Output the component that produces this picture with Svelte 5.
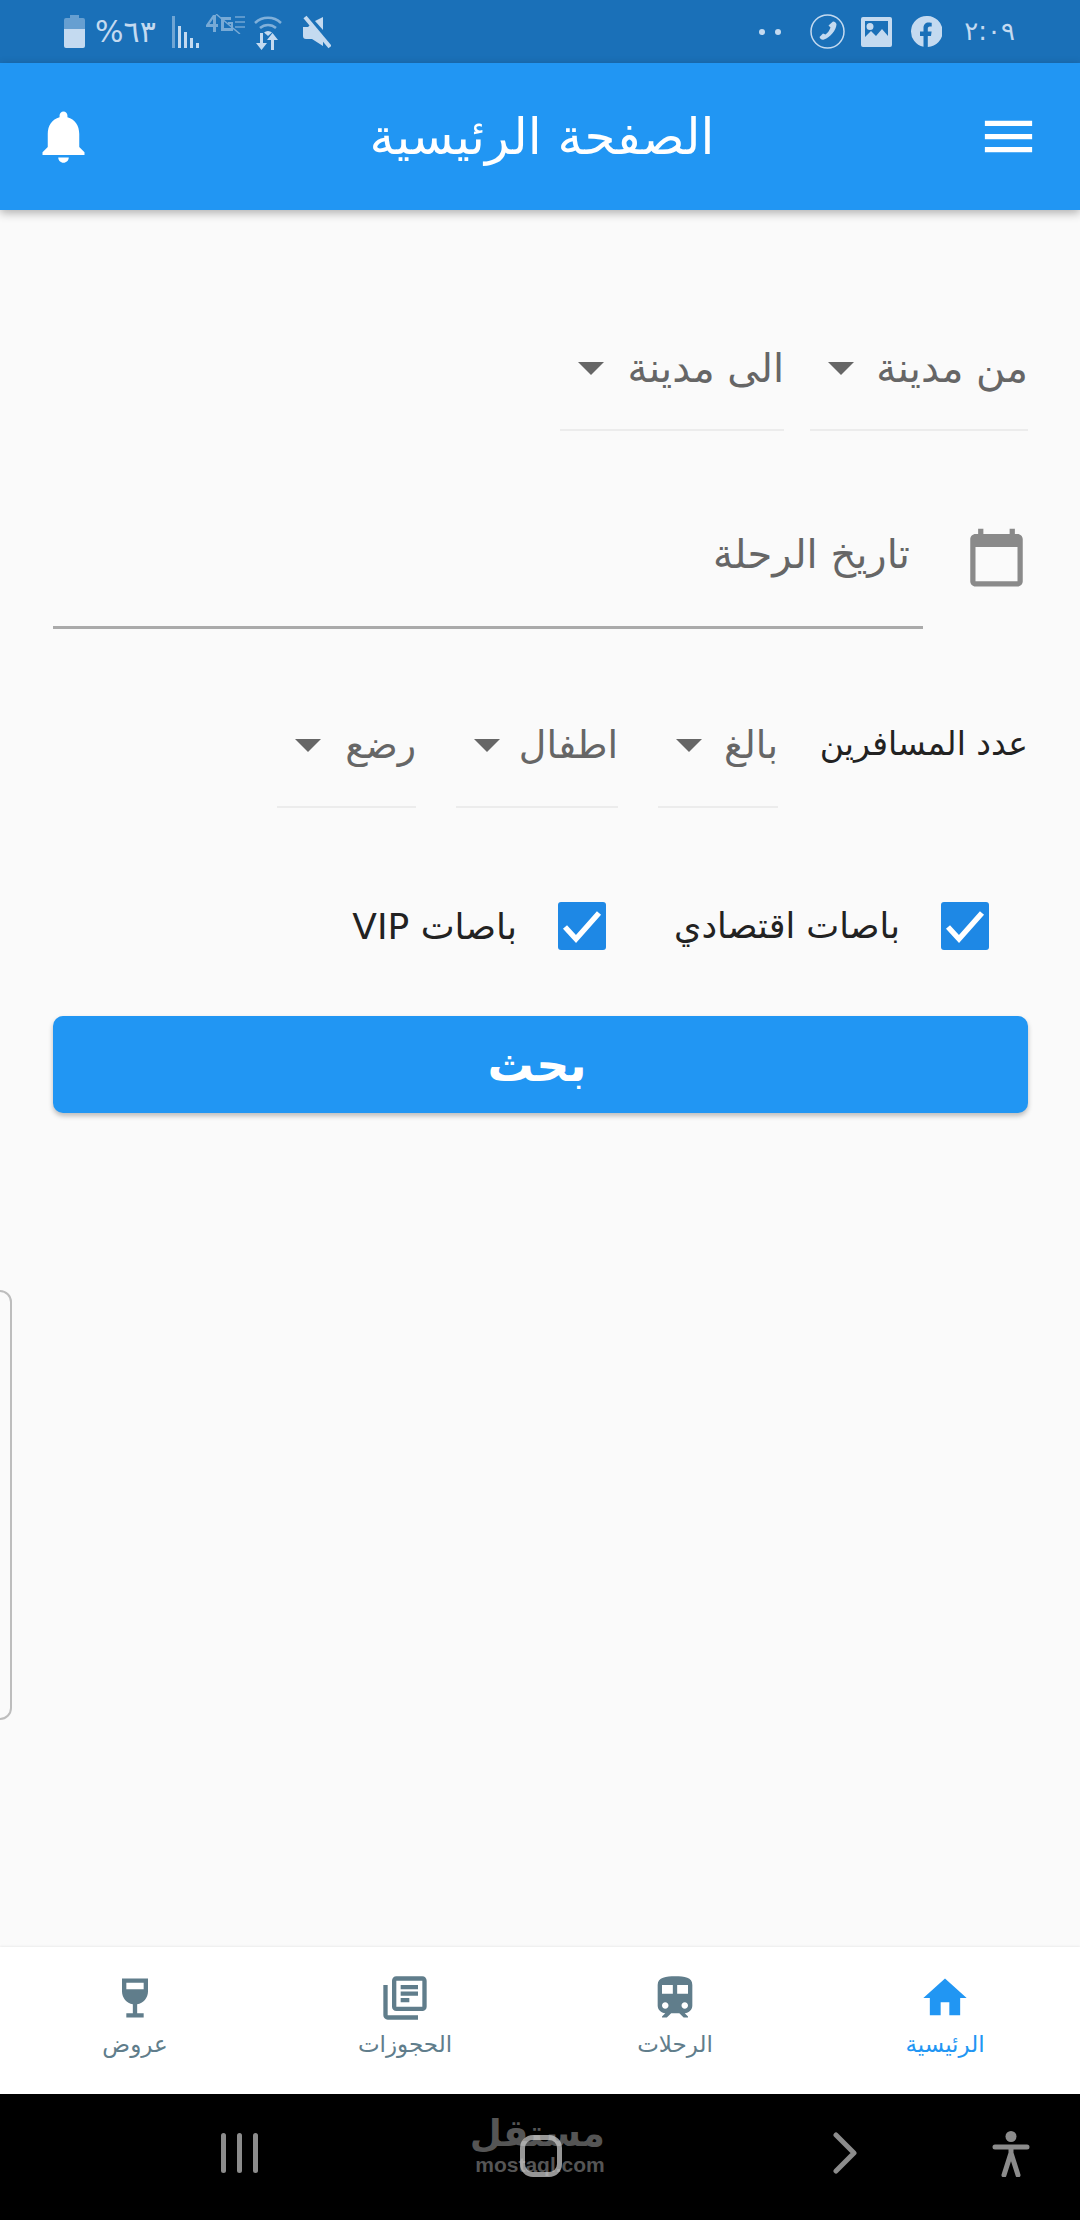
<script>
  const tabs = [
    { label: 'الرئيسية', icon: 'M10 20v-6h4v6h5v-8h3L12 3 2 12h3v8z', active: true },
    { label: 'الرحلات', icon: 'M12 2c-4 0-8 .5-8 4v9.5C4 17.43 5.57 19 7.5 19L6 20.5v.5h2.23l2-2H14l2 2h2v-.5L16.5 19c1.93 0 3.5-1.57 3.5-3.5V6c0-3.5-3.58-4-8-4zM7.5 17c-.83 0-1.5-.67-1.5-1.5S6.67 14 7.5 14s1.5.67 1.5 1.5S8.33 17 7.5 17zm3.5-7H6V6h5v4zm2 0V6h5v4h-5zm3.5 7c-.83 0-1.5-.67-1.5-1.5s.67-1.5 1.5-1.5 1.5.67 1.5 1.5-.67 1.5-1.5 1.5z' },
    { label: 'الحجوزات', icon: 'M4 6H2v14c0 1.1.9 2 2 2h14v-2H4V6zm16-4H8c-1.1 0-2 .9-2 2v12c0 1.1.9 2 2 2h12c1.1 0 2-.9 2-2V4c0-1.1-.9-2-2-2zm0 14H8V4h12v12zM10 9h8v2h-8zm0 3h4v2h-4zm0-6h8v2h-8z' },
    { label: 'عروض', icon: 'M6 3v6c0 2.97 2.16 5.43 5 5.91V19H8v2h8v-2h-3v-4.09c2.84-.48 5-2.94 5-5.91V3H6zm10 5H8V5h8v3z' }
  ];
</script>

<div class="page">
  <!-- شريط الحالة -->
  <div class="status">
    <div class="status-side">
      <svg class="battery" viewBox="0 0 21 33" width="21" height="33">
        <path d="M6 0h9v3h4a2 2 0 0 1 2 2v9H0V5a2 2 0 0 1 2-2h4z" opacity="0.45" />
        <path d="M0 14h21v17a2 2 0 0 1-2 2H2a2 2 0 0 1-2-2z" />
      </svg>
      <span class="status-text pct">%٦٣</span>
      <svg class="signal" viewBox="0 0 27 32" width="27" height="32">
        <rect x="0" y="0" width="3" height="32" opacity="0.5" />
        <rect x="6" y="10" width="3" height="22" />
        <rect x="12" y="16" width="3" height="16" />
        <rect x="18" y="22" width="3" height="10" />
        <rect x="24" y="27" width="3" height="5" />
      </svg>
      <svg class="lte" viewBox="0 0 39 20" width="39" height="20">
        <path d="M0 11 7 1h3v9h2v3h-2v5H7v-5H0zM3.500 10H7V5z" />
        <path d="M15 3h10v3h-7v8h7v-4h-3V8h5v9H15z" />
        <path d="M29 2h10v2H29zM29 7h10v2H29zM29 12h10v2H29z" opacity="0.7" />
        <path d="M10 0 L34 20" stroke="#c4daf0" stroke-width="1.500" />
      </svg>
      <svg class="wifi" viewBox="0 0 28 36" width="28" height="36">
        <path d="M1 9a19 19 0 0 1 26 0" fill="none" stroke="#c4daf0" stroke-width="2.500" opacity="0.6" />
        <path d="M6 14a12 12 0 0 1 16 0" fill="none" stroke="#c4daf0" stroke-width="2.500" opacity="0.6" />
        <path d="M10 18.500a6 6 0 0 1 8 0L14 22z" />
        <path d="M6 19h3v10h4l-5.500 7L2 29h4zM20 36h-3V26h-4l5.500-7 5.500 7h-4z" />
      </svg>
      <svg class="mute" viewBox="0 0 28 34" width="28" height="34">
        <path d="M0 12h5l3-3 12 14v8L9 24H3a3 3 0 0 1-3-3z" />
        <path d="M20 2v13L12 6z" />
        <path d="M2 2l25 30" stroke="#c4daf0" stroke-width="4" />
      </svg>
    </div>
    <div class="status-side">
      <span class="notif-dots"><i></i><i></i></span>
      <svg class="call" viewBox="0 0 35 35" width="35" height="35">
        <circle cx="17.500" cy="17.500" r="16.500" fill="none" stroke="#c4daf0" stroke-width="1.500" />
        <path d="M23 7.500c2 0 3.500 1.500 3.500 3-.5 6-6 12.500-12.500 15-2 .7-4-.5-4.500-2.500l3.500-3.500 2.500 1c2.500-2 4-4 5-7l-2-2z" />
      </svg>
      <svg class="pic" viewBox="0 0 31 30" width="31" height="30">
        <path fill-rule="evenodd" d="M2 0h27a2 2 0 0 1 2 2v26a2 2 0 0 1-2 2H2a2 2 0 0 1-2-2V2a2 2 0 0 1 2-2zM4 4v16l6-6 5 5 6-7 6 7V4zM9 6a3.500 3.500 0 1 1 0 7 3.500 3.500 0 0 1 0-7z" />
      </svg>
      <svg class="fb" viewBox="0 0 31 32" width="31" height="32">
        <path d="M15.500 0a15.500 15.500 0 0 0-3 30.700V20H9v-4.500h3.500V12c0-3.500 2-5.500 5.200-5.500 1.500 0 3 .3 3 .3V10.500h-1.700c-1.700 0-2.200 1-2.200 2.200v2.800h3.800l-.6 4.500H16.800v11A15.500 15.500 0 0 0 15.500 0z" />
      </svg>
      <span class="status-text time">٢:٠٩</span>
    </div>
  </div>

  <!-- شريط التطبيق -->
  <header class="appbar">
    <svg class="appbar-icon" viewBox="0 0 24 24" width="63" height="63">
      <path d="M12 22c1.100 0 2-.9 2-2h-4c0 1.100.89 2 2 2zm6-6v-5c0-3.070-1.640-5.640-4.500-6.320V4c0-.83-.67-1.500-1.500-1.500s-1.500.67-1.500 1.500v.68C7.630 5.360 6 7.920 6 11v5l-2 2v1h16v-1l-2-2z" />
    </svg>
    <h1 class="title" dir="rtl">الصفحة الرئيسية</h1>
    <svg class="appbar-icon" viewBox="0 0 24 24" width="63" height="63">
      <path d="M3 18h18v-2H3v2zm0-5h18v-2H3v2zm0-7v2h18V6H3z" />
    </svg>
  </header>

  <main class="content" dir="rtl">
    <div class="edge-handle"></div>

    <div class="city-row">
      <div class="dropdown w-from"><span>من مدينة</span><b class="caret"></b></div>
      <div class="dropdown w-to"><span>الى مدينة</span><b class="caret"></b></div>
    </div>

    <div class="date-row">
      <svg class="calendar" viewBox="0 0 24 24" width="63" height="63">
        <path d="M20 3h-1V1h-2v2H7V1H5v2H4c-1.100 0-2 .9-2 2v16c0 1.100.9 2 2 2h16c1.100 0 2-.9 2-2V5c0-1.100-.9-2-2-2zm0 18H4V8h16v13z" />
      </svg>
      <div class="date-field">تاريخ الرحلة</div>
    </div>

    <div class="passengers">
      <div class="pass-label">عدد المسافرين</div>
      <div class="dropdown w-adult"><span>بالغ</span><b class="caret"></b></div>
      <div class="dropdown w-child"><span>اطفال</span><b class="caret"></b></div>
      <div class="dropdown w-infant"><span>رضع</span><b class="caret"></b></div>
    </div>

    <div class="checks">
      <div class="check check-eco">
        <span class="box"><svg viewBox="0 0 48 48" width="48" height="48"><polyline points="7,25 18,37 41,11" /></svg></span>
        <span>باصات اقتصادي</span>
      </div>
      <div class="check">
        <span class="box"><svg viewBox="0 0 48 48" width="48" height="48"><polyline points="7,25 18,37 41,11" /></svg></span>
        <span>باصات VIP</span>
      </div>
    </div>

    <button class="search">بحث</button>
  </main>

  <nav class="tabs" dir="rtl">
    {#each tabs as tab}
      <div class="tab {tab.active ? 'tab--active' : ''}">
        <svg viewBox="0 0 24 24" width="52" height="52"><path d={tab.icon} /></svg>
        <span>{tab.label}</span>
      </div>
    {/each}
  </nav>

  <div class="sysbar">
    <svg class="sys-access" viewBox="0 0 38 46" width="38" height="46">
      <circle cx="19" cy="5.500" r="5.500" />
      <path d="M3 16h32M19 16v9M19 22l-7 22M19 22l7 22" fill="none" stroke="#8c8c8c" stroke-width="5" stroke-linecap="round" />
    </svg>
    <svg class="sys-back" viewBox="0 0 24 42" width="24" height="42">
      <polyline points="3,3 21,21 3,39" />
    </svg>
    <div class="watermark">
      <div class="wm-ar" dir="rtl">مستقل</div>
      <div class="wm-en">mostaql.com</div>
      <div class="sys-home"></div>
    </div>
    <div class="sys-recent"><i></i><i></i><i></i></div>
  </div>
</div>

<style>
  :global(body) {
    margin: 0;
    background: #fafafa;
  }
  .page {
    width: 1080px;
    height: 2220px;
    display: flex;
    flex-direction: column;
    font-family: "DejaVu Sans", "Noto Sans", sans-serif;
    overflow: hidden;
    position: relative;
  }

  /* status bar */
  .status {
    height: 63px;
    background: #1a70b8;
    display: flex;
    justify-content: space-between;
    align-items: center;
    padding: 0 65px 0 64px;
    flex: none;
    fill: #c4daf0;
    color: #c4daf0;
  }
  .status-side {
    display: flex;
    align-items: center;
  }
  .status-text { font-size: 30px; line-height: 33px; }
  .pct { margin-left: 10px; width: 68px; }
  .signal { margin-left: 9px; }
  .lte { margin: -16px 0 0 7px; opacity: 0.55; }
  .wifi { margin-left: 9px; }
  .mute { margin-left: 21px; }
  .notif-dots { display: flex; gap: 10px; margin-right: 29px; }
  .notif-dots i { width: 6px; height: 6px; border-radius: 50%; background: #c4daf0; }
  .pic { margin-left: 16px; }
  .fb { margin-left: 19px; }
  .time { margin-left: 22px; font-size: 26px; }

  /* app bar */
  .appbar {
    height: 147px;
    flex: none;
    background: #2196f3;
    display: flex;
    align-items: center;
    justify-content: space-between;
    padding: 0 40px 0 32px;
    box-shadow: 0 3px 9px rgba(0, 0, 0, 0.3);
    position: relative;
    z-index: 1;
    fill: #fff;
  }
  .title {
    margin: 0 0 0 12px;
    font-size: 50px;
    font-weight: 400;
    color: #fff;
  }

  .content {
    flex: 1;
    background: #fafafa;
    padding: 0 52px 0 53px;
    position: relative;
  }
  .edge-handle {
    position: absolute;
    left: -12px;
    top: 1080px;
    width: 20px;
    height: 426px;
    border: 2px solid #bdbdbd;
    border-radius: 12px;
  }

  .dropdown {
    display: flex;
    align-items: center;
    justify-content: space-between;
    height: 92px;
    padding-bottom: 32px;
    box-sizing: border-box;
    border-bottom: 2px solid #ececec;
    font-size: 40px;
    color: #666;
    white-space: nowrap;
  }
  .caret {
    width: 0;
    height: 0;
    border-left: 13px solid transparent;
    border-right: 13px solid transparent;
    border-top: 13px solid #666;
    margin-left: 18px;
  }
  .city-row {
    display: flex;
    gap: 26px;
    margin-top: 129px;
  }
  .w-from { width: 218px; }
  .w-to { width: 224px; }

  .date-row {
    display: flex;
    margin-top: 95px;
    gap: 42px;
  }
  .calendar { fill: #8a8a8a; flex: none; }
  .date-field {
    width: 870px;
    height: 103px;
    box-sizing: border-box;
    border-bottom: 3px solid #aaa;
    font-size: 40px;
    line-height: 56px;
    color: #666;
    padding: 0 13px 0 0;
  }

  .passengers {
    display: flex;
    gap: 40px;
    margin-top: 87px;
  }
  .pass-label {
    font-size: 33px;
    color: #222;
    width: 208px;
    height: 60px;
    line-height: 56px;
    white-space: nowrap;
    margin-left: 2px;
  }
  .passengers .dropdown { font-size: 38px; }
  .w-adult { width: 120px; }
  .w-child { width: 162px; }
  .w-infant { width: 139px; }

  .checks {
    display: flex;
    margin-top: 94px;
    padding-right: 39px;
  }
  .check {
    display: flex;
    align-items: center;
    gap: 41px;
    font-size: 36px;
    color: #222;
  }
  .check-eco { margin-left: 68px; font-size: 35px; }
  .box {
    width: 48px;
    height: 48px;
    border-radius: 3px;
    background: #1e88e5;
    display: block;
  }
  .box polyline { fill: none; stroke: #fff; stroke-width: 5.500; }

  .search {
    display: block;
    width: 100%;
    height: 97px;
    margin-top: 66px;
    padding: 0 7px 0 0;
    border: none;
    border-radius: 10px;
    background: #2196f3;
    color: #fff;
    font-family: inherit;
    font-size: 46px;
    font-weight: 700;
    box-shadow: 0 3px 5px rgba(0, 0, 0, 0.25);
  }

  /* bottom tabs */
  .tabs {
    height: 147px;
    flex: none;
    background: #fff;
    display: grid;
    grid-template-columns: repeat(4, 1fr);
    box-shadow: 0 -1px 2px rgba(0, 0, 0, 0.06);
    position: relative;
  }
  .tab {
    display: flex;
    flex-direction: column;
    align-items: center;
    padding-top: 25px;
    fill: #607d8b;
    color: #607d8b;
    font-size: 23px;
  }
  .tab span { margin-top: 4px; line-height: 32px; }
  .tab--active { fill: #2196f3; color: #2196f3; }

  /* system navigation */
  .sysbar {
    height: 126px;
    flex: none;
    background: #000;
    display: flex;
    flex-direction: row-reverse;
    align-items: center;
    padding: 0 50px 0 0;
  }
  .sys-access { fill: #8c8c8c; margin-top: -6px; }
  .sys-back { margin: -8px 135px 0 0; }
  .sys-back polyline { fill: none; stroke: #8c8c8c; stroke-width: 5; stroke-linecap: round; stroke-linejoin: round; }
  .watermark {
    width: 130px;
    color: #555;
    text-align: center;
    position: relative;
    margin: -28px 228px 0 0;
  }
  .wm-ar { font-size: 37px; line-height: 44px; font-weight: 700; margin-left: 4px; }
  .wm-en { font-size: 21px; line-height: 18px; font-family: "Liberation Sans", sans-serif; font-weight: 700; }
  .sys-home {
    position: absolute;
    left: 45px;
    top: 23px;
    width: 32px;
    height: 32px;
    border: 5px solid rgba(200, 200, 200, 0.75);
    border-radius: 13px;
  }
  .sys-recent { display: flex; gap: 11px; height: 40px; margin: -8px 217px 0 0; }
  .sys-recent i { width: 5px; background: #8c8c8c; border-radius: 3px; }
</style>
